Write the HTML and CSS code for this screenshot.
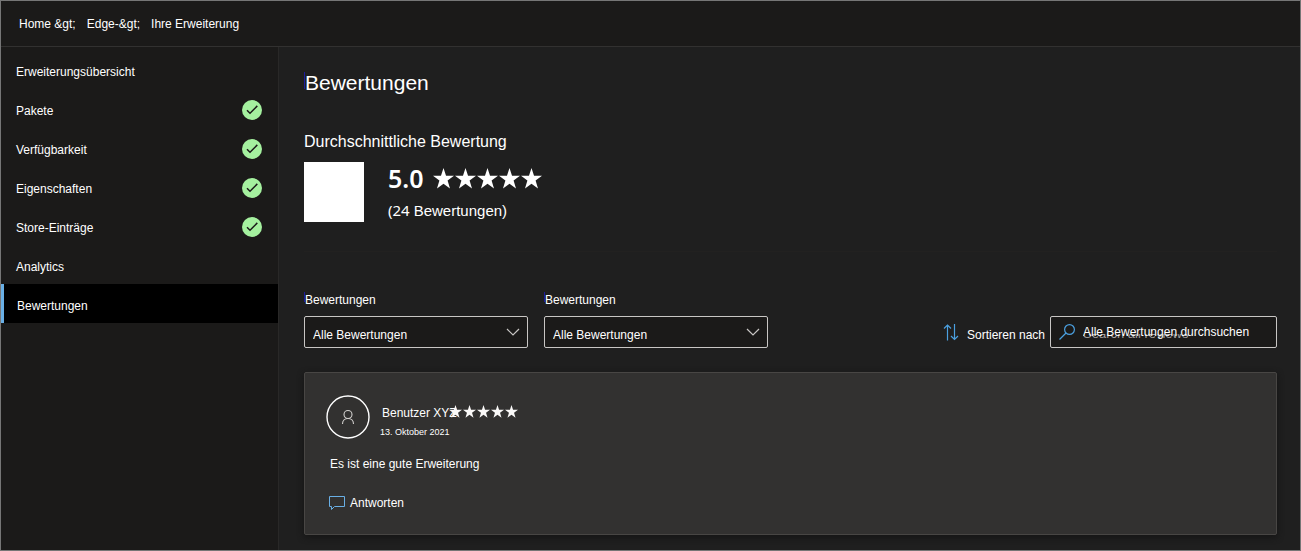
FILE: index.html
```html
<!DOCTYPE html>
<html lang="de">
<head>
<meta charset="utf-8">
<meta name="viewport" content="width=device-width, initial-scale=1">
<title>Bewertungen</title>
<link rel="stylesheet" href="styles.css">
</head>
<body>
<svg class="defs" aria-hidden="true">
  <symbol id="star" viewBox="0 0 20 20"><path d="M10 0l2.4 7.3H20l-6.1 4.6 2.3 7.6L10 15l-6.2 4.5 2.3-7.6L0 7.3h7.6z" fill="currentColor"/></symbol>
  <symbol id="check" viewBox="0 0 20 20"><circle cx="10" cy="10" r="10" fill="#a5f19f"/><path d="M5 10.200l3 3 7.300-7.300" fill="none" stroke="#1b1a19" stroke-width="1.5"/></symbol>
</svg>
<div class="window">
  <header class="topbar">
    <nav class="crumbs" aria-label="Pfad">
      <a href="#">Home &amp;gt;</a>
      <a href="#">Edge-&amp;gt;</a>
      <a href="#">Ihre Erweiterung</a>
    </nav>
  </header>
  <div class="body">
    <nav class="sidebar" aria-label="Erweiterung">
      <a class="item" href="#">Erweiterungsübersicht</a>
      <a class="item" href="#">Pakete<svg class="check"><use href="#check"/></svg></a>
      <a class="item" href="#">Verfügbarkeit<svg class="check"><use href="#check"/></svg></a>
      <a class="item" href="#">Eigenschaften<svg class="check"><use href="#check"/></svg></a>
      <a class="item" href="#">Store-Einträge<svg class="check"><use href="#check"/></svg></a>
      <a class="item" href="#">Analytics</a>
      <a class="item active" href="#" aria-current="page">Bewertungen</a>
    </nav>
    <main class="main">
      <h1 class="title">Bewertungen</h1>
      <section class="summary">
        <h2 class="subtitle">Durchschnittliche Bewertung</h2>
        <div class="score">
          <div class="logo"></div>
          <div class="score-text">
            <div class="score-line">
              <span class="value">5.0</span>
              <span class="stars large"><svg><use href="#star"/></svg><svg><use href="#star"/></svg><svg><use href="#star"/></svg><svg><use href="#star"/></svg><svg><use href="#star"/></svg></span>
            </div>
            <div class="count"><span class="number">(24</span> <span>Bewertungen)</span></div>
          </div>
        </div>
      </section>
      <div class="filters">
        <div class="field">
          <label for="f1">Bewertungen</label>
          <div class="select-wrap">
            <select id="f1"><option>Alle Bewertungen</option></select>
            <svg class="chevron" viewBox="0 0 14 8"><path d="M1 1l6 6 6-6" fill="none" stroke="currentColor" stroke-width="1.2"/></svg>
          </div>
        </div>
        <div class="field">
          <label for="f2">Bewertungen</label>
          <div class="select-wrap">
            <select id="f2"><option>Alle Bewertungen</option></select>
            <svg class="chevron" viewBox="0 0 14 8"><path d="M1 1l6 6 6-6" fill="none" stroke="currentColor" stroke-width="1.2"/></svg>
          </div>
        </div>
        <button class="sort" type="button">
          <svg class="sort-icon" viewBox="0 0 16 17"><path d="M4.500 16.500V1M1 4.500L4.500 1 8 4.500M11.500 0v15.500M8 12l3.500 3.500L15 12" fill="none" stroke="currentColor" stroke-width="1.2"/></svg>
          Sortieren nach
        </button>
        <div class="search">
          <svg class="search-icon" viewBox="0 0 16 16"><circle cx="10.5" cy="5.5" r="4.9" fill="none" stroke="currentColor" stroke-width="1.2"/><path d="M7 9L.5 15.5" stroke="currentColor" stroke-width="1.2" fill="none"/></svg>
          <div class="search-box">
            <span class="search-under" aria-hidden="true">Search all reviews</span>
            <input type="text" aria-label="Alle Bewertungen durchsuchen" placeholder="Alle Bewertungen durchsuchen">
          </div>
        </div>
      </div>
      <article class="review">
        <div class="author">
          <div class="avatar"><svg viewBox="0 0 44 44"><circle cx="22" cy="22" r="21" fill="none" stroke="#fff" stroke-width="1.400"/><g fill="none" stroke="#d2d0ce" stroke-width="1.100"><circle cx="22" cy="19.500" r="4"/><path d="M16.500 29c0-3.400 2.400-5.500 5.500-5.500s5.500 2.100 5.500 5.500"/></g></svg></div>
          <div class="who">
            <div class="name-line">
              <span class="name">Benutzer XYZ</span>
              <span class="stars small"><svg><use href="#star"/></svg><svg><use href="#star"/></svg><svg><use href="#star"/></svg><svg><use href="#star"/></svg><svg><use href="#star"/></svg></span>
            </div>
            <time class="date" datetime="2021-10-13">13. Oktober 2021</time>
          </div>
        </div>
        <p class="comment">Es ist eine gute Erweiterung</p>
        <button class="reply" type="button">
          <svg viewBox="0 0 16 15"><path d="M.5.5h15v10H5.500l-3 3v-3h-2z" fill="none" stroke="currentColor"/></svg>
          Antworten
        </button>
      </article>
    </main>
  </div>
</div>
</body>
</html>
```
FILE: styles.css
```css
* { box-sizing: border-box; }
body {
  margin: 0;
  background: #1f1f1f;
  color: #fff;
  font: 12px/16px "Liberation Sans", Arial, sans-serif;
}
a { color: inherit; text-decoration: none; }
button, select, input { font: inherit; color: inherit; }
.defs { position: absolute; width: 0; height: 0; }
.window {
  display: flex;
  flex-direction: column;
  min-height: 100vh;
  border: 1px solid #767676;
}
.topbar {
  padding: 15px 18px 14px;
  background: #1b1a19;
  border-bottom: 1px solid #323130;
}
.crumbs { display: flex; gap: 11px; }
.body { display: flex; flex: 1; }
.sidebar {
  flex: 0 0 278px;
  padding-top: 3px;
  background: #1b1a19;
  border-right: 1px solid #292827;
}
.item {
  display: flex;
  align-items: center;
  justify-content: space-between;
  height: 39px;
  padding: 4px 16px 0 15px;
}
.item.active {
  padding-left: 13px;
  background: #000;
  border-left: 3px solid #69afe5;
}
.check { width: 20px; height: 20px; margin-bottom: 2px; }
.main { flex: 1; min-width: 0; padding: 22px 23px 15px 25px; }
.title {
  margin: 0;
  padding-left: 1px;
  background: linear-gradient(#1c1c9c, #1c1c9c) 0 3px / 1px 17px no-repeat;
  font-size: 21px;
  line-height: 28px;
  font-weight: 400;
}
.summary {
  margin-top: 35px;
  padding-bottom: 28px;
  border-bottom: 1px solid #222120;
}
.subtitle { margin: 0; font-size: 16px; line-height: 20px; font-weight: 400; }
.score { display: flex; gap: 24px; margin-top: 10px; }
.logo { width: 60px; height: 60px; background: #fff; }
.score-line { display: flex; align-items: center; gap: 9px; height: 32px; }
.value { font: 600 25px/32px "Noto Sans", "Open Sans", sans-serif; }
.stars { display: flex; }
.large { gap: 1px; }
.large svg { width: 21px; height: 21px; }
.small { gap: 1px; margin: -4px 0 0 -8px; color: #faf9f8; }
.small svg { width: 13px; height: 13px; }
.count { display: flex; align-items: baseline; gap: 4px; margin-top: 4px; font-size: 15px; line-height: 24px; }
.number { font: 15px/24px "Noto Sans", sans-serif; }
.filters { display: flex; align-items: flex-end; gap: 16px; margin-top: 40px; }
.field { width: 224px; }
.field label {
  display: block;
  margin-bottom: 8px;
  padding-left: 1px;
  background: linear-gradient(#1c1c9c, #1c1c9c) 0 0 / 1px 10px no-repeat;
}
.select-wrap { position: relative; }
select {
  display: block;
  width: 100%;
  height: 32px;
  padding: 5px 28px 0 8px;
  appearance: none;
  background: #1b1a19;
  border: 1px solid #c8c6c4;
  border-radius: 2px;
}
.chevron { position: absolute; right: 8px; top: 12px; width: 14px; height: 8px; color: #c8c6c4; }
.sort {
  display: flex;
  align-items: center;
  gap: 8px;
  height: 32px;
  margin: 0 -11px 0 auto;
  padding: 6px 0 0;
  background: none;
  border: 0;
}
.sort-icon { width: 16px; height: 17px; margin-bottom: 6px; color: #4ba0e0; }
.search {
  display: flex;
  align-items: center;
  gap: 8px;
  width: 227px;
  height: 32px;
  padding: 0 8px;
  background: #1b1a19;
  border: 1px solid #c8c6c4;
  border-radius: 2px;
}
.search-icon { width: 16px; height: 16px; color: #4ba0e0; }
.search-box { position: relative; flex: 1; }
.search-box input {
  position: relative;
  display: block;
  width: 100%;
  padding: 0;
  background: none;
  border: 0;
  outline: 0;
}
.search-box input::placeholder { color: #fff; opacity: 1; }
.search-under { position: absolute; left: 0; top: 2px; color: #a19f9d; font-size: 13px; white-space: nowrap; clip-path: inset(8px 0 0 0); }
.review {
  margin-top: 24px;
  padding: 22px 21px 23px;
  background: #323130;
  border: 1px solid #484644;
  border-radius: 2px;
  box-shadow: 0 2px 6px #141414;
}
.author { display: flex; gap: 10px; }
.avatar, .avatar svg { display: block; width: 44px; height: 44px; }
.who { padding-top: 10px; }
.name-line { display: flex; align-items: center; }
.name { padding-left: 2px; }
.date { display: block; margin-top: 5px; font-size: 9px; line-height: 12px; }
.comment { margin: 17px 4px 0; }
.reply {
  display: flex;
  align-items: center;
  gap: 5px;
  margin: 23px 0 0 3px;
  padding: 0;
  background: none;
  border: 0;
}
.reply svg { width: 16px; height: 15px; color: #69afe5; }
```
